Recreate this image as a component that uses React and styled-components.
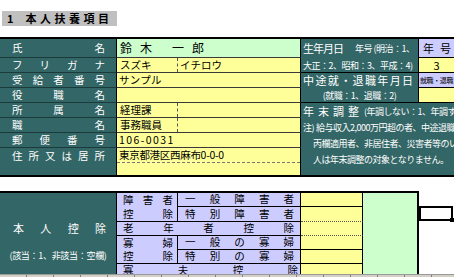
import React from 'react'
import styled, { createGlobalStyle } from 'styled-components'

const GlobalStyle = createGlobalStyle`
  html, body { margin: 0; padding: 0; background: #fff; }
  body { font-family: "Noto Sans CJK JP", "Noto Sans", sans-serif; }
  * { box-sizing: border-box; }
`

const teal = '#336666'
const lavender = '#ccccff'
const yellow = '#ffff99'
const green = '#ccffcc'

// each character as its own flex item, so a row can spread them edge to edge
const Spread = ({ text }) => [...text].map((c, i) => <span key={i}>{c}</span>)

const Sheet = styled.div`
  width: 454px;
  height: 277px;
  overflow: hidden;
  display: flex;
  flex-direction: column;
  padding-top: 11px;
`

const Title = styled.div`
  margin-left: 2px;
  width: 115px;
  height: 15px;
  background: #c0c0c0;
  display: flex;
  align-items: center;
  padding-left: 5px;
  font-size: 11px;
  font-weight: bold;
  line-height: 1;
  color: #000;
`
const TitleNum = styled.span`
  margin-right: 12px;
`
const TitleText = styled.span`
  letter-spacing: 3.5px;
`

const TopGrid = styled.div`
  margin-top: 11px;
  display: grid;
  grid-template-columns: 117px 184px 118px 1fr;
  grid-template-rows: 19px repeat(6, 15px) 27px;
  border-top: 2px solid #000;
  border-bottom: 2px solid #000;
  flex: none;
`

const Cell = styled.div`
  grid-column: ${p => p.$c};
  grid-row: ${p => p.$r};
  overflow: hidden;
  white-space: nowrap;
  line-height: 1;
`

const Label = styled(Cell)`
  background: ${teal};
  color: #fff;
  font-size: 10.5px;
  display: flex;
  justify-content: space-between;
  align-items: ${p => (p.$top ? 'flex-start' : 'center')};
  padding: ${p => (p.$top ? '3px' : '0')} 11px 0 12px;
  border-right: 1px solid #000;
  border-bottom: ${p => (p.$last ? 'none' : '1px solid #1c3a3a')};
`

const Data = styled(Cell)`
  background: ${p => (p.$green ? green : yellow)};
  color: #000;
  font-size: 10.5px;
  display: flex;
  align-items: stretch;
  border-right: 1px solid #000;
  border-bottom: ${p => (p.$last ? 'none' : '1px solid #3a3a3a')};
`

const Part = styled.div`
  display: flex;
  align-items: center;
  padding-left: ${p => (p.$split ? 3 : 2)}px;
  width: ${p => (p.$split ? '61px' : 'auto')};
  flex: ${p => (p.$split ? 'none' : 1)};
  border-right: ${p => (p.$split ? '1px dashed #555' : 'none')};
  letter-spacing: ${p => p.$ls || 'normal'};
`

const Address = styled.div`
  flex: 1;
  display: flex;
  flex-direction: column;
`
const AddressLine = styled.div`
  height: 15px;
  display: flex;
  align-items: center;
  padding-left: 2px;
  letter-spacing: -0.3px;
  border-bottom: 1px dashed #777;
`

const Name = styled.div`
  display: flex;
  align-items: center;
  padding-left: 3px;
  font-size: 12px;
`
const NameGroup = styled.span`
  letter-spacing: 8px;
  margin-left: ${p => p.$gap || 0}px;
`

const Info = styled(Cell)`
  background: ${teal};
  color: #fff;
  display: flex;
  flex-direction: column;
  border-right: ${p => (p.$wide ? 'none' : '1px solid #000')};
  border-bottom: ${p => (p.$wide ? 'none' : '1px solid #000')};
`
const InfoLine = styled.div`
  height: ${p => p.$h}px;
  flex: none;
  display: flex;
  align-items: center;
  justify-content: ${p => (p.$spread ? 'space-between' : p.$center ? 'center' : 'flex-start')};
  padding: 0 ${p => (p.$spread ? 5 : 0)}px 0 ${p => p.$indent ?? 2}px;
  font-size: ${p => (p.$spread ? '11px' : '9px')};
`
const Big = styled.span`
  font-size: 11px;
  letter-spacing: ${p => p.$ls || '-1px'};
  margin-right: ${p => p.$mr || 0}px;
`
const Small = styled.span`
  font-size: 9px;
  letter-spacing: -0.5px;
  margin-left: ${p => p.$ml || 0}px;
`

const Side = styled(Cell)`
  background: ${p => (p.$lav ? lavender : yellow)};
  color: #000;
  font-size: ${p => (p.$tiny ? '7px' : '11px')};
  letter-spacing: ${p => (p.$tiny ? '-0.4px' : 'normal')};
  display: flex;
  align-items: center;
  justify-content: ${p => (p.$spread ? 'space-between' : 'center')};
  padding: 0 ${p => (p.$spread ? '3px 0 4px' : '0')};
  border-bottom: 1px solid #000;
`

const Lower = styled.div`
  margin-top: 14px;
  flex: 1;
  min-height: 0;
  display: flex;
  align-items: flex-start;
`

const LowerGrid = styled.div`
  display: grid;
  grid-template-columns: 117px 61px 123px 62px 56px;
  grid-template-rows: 14px 15px 14px 14px 14px 10px;
  border-top: 2px solid #000;
`

const Deduct = styled(Cell)`
  background: ${teal};
  color: #fff;
  border-right: 1px solid #000;
  display: flex;
  flex-direction: column;
  padding-top: 28px;
`
const DeductTitle = styled.div`
  height: 14px;
  display: flex;
  align-items: center;
  justify-content: space-between;
  padding: 0 10px 0 13px;
  font-size: 11px;
`
const DeductNote = styled.div`
  margin-top: 13px;
  height: 14px;
  display: flex;
  align-items: center;
  justify-content: center;
  font-size: 9px;
  letter-spacing: -0.3px;
`

const Lav = styled(Cell)`
  background: ${lavender};
  color: #000;
  font-size: 10.5px;
  display: flex;
  flex-direction: column;
  border-right: 1px solid #000;
  border-bottom: ${p => (p.$last ? 'none' : '1px solid #000')};
`
const LavLine = styled.div`
  flex: 1;
  min-height: 0;
  display: flex;
  align-items: ${p => (p.$top ? 'flex-start' : 'center')};
  justify-content: space-between;
  padding: ${p => (p.$top ? 1 : 0)}px ${p => p.$pr}px 0 ${p => p.$pl}px;
`

const Entry = styled(Cell)`
  background: ${yellow};
  border-right: 1px solid #000;
  border-bottom: ${p =>
    p.$line === 'dot' ? '1px dotted #555' : p.$line === 'none' ? 'none' : '1px solid #000'};
`

const Memo = styled(Cell)`
  background: ${green};
  border-right: 2px solid #000;
`

const Margin = styled.div`
  flex: 1;
  padding-top: 15px;
`
const Picked = styled.div`
  position: relative;
  width: 34px;
  height: 15px;
  border: 2px solid #000;
  background: #fff;
`
const Handle = styled.span`
  position: absolute;
  right: -3px;
  bottom: -3px;
  width: 4px;
  height: 4px;
  background: #000;
`

const TabStrip = styled.div`
  height: 3px;
  flex: none;
  border-top: 1px solid #9a9a9a;
  background: repeating-linear-gradient(90deg, #d4d0c8 0 26px, #808080 26px 27px);
`

const labels = ['氏名', 'フリガナ', '受給者番号', '役職名', '所属名', '職名', '郵便番号', '住所又は居所']

export default function App() {
  return (
    <>
      <GlobalStyle />
      <Sheet>
        <Title>
          <TitleNum>1</TitleNum>
          <TitleText>本人扶養項目</TitleText>
        </Title>

        <TopGrid>
          {labels.map((t, i) => (
            <Label key={t} $c="1" $r={`${i + 1}`} $top={i === 7} $last={i === 7}>
              <Spread text={t} />
            </Label>
          ))}

          <Data $c="2" $r="1" $green>
            <Name>
              <NameGroup>鈴木</NameGroup>
              <NameGroup $gap={12}>一郎</NameGroup>
            </Name>
          </Data>
          <Data $c="2" $r="2">
            <Part $split>スズキ</Part>
            <Part>イチロウ</Part>
          </Data>
          <Data $c="2" $r="3">
            <Part $ls="0.3px">サンプル</Part>
          </Data>
          <Data $c="2" $r="4" />
          <Data $c="2" $r="5">
            <Part $split>経理課</Part>
            <Part />
          </Data>
          <Data $c="2" $r="6">
            <Part $split>事務職員</Part>
            <Part />
          </Data>
          <Data $c="2" $r="7">
            <Part $ls="1.4px">106-0031</Part>
          </Data>
          <Data $c="2" $r="8" $last>
            <Address>
              <AddressLine>東京都港区西麻布0-0-0</AddressLine>
            </Address>
          </Data>

          <Info $c="3" $r="1 / span 2">
            <InfoLine $h={19}>
              <Big $mr={12}>生年月日</Big>
              <Small>年号 (明治：1、</Small>
            </InfoLine>
            <InfoLine $h={14}>
              <Small>大正：2、昭和：3、平成：4)</Small>
            </InfoLine>
          </Info>
          <Info $c="3" $r="3 / span 2">
            <InfoLine $h={15} $spread>
              <Spread text="中途就・退職年月日" />
            </InfoLine>
            <InfoLine $h={14} $center $indent={0}>
              <Small>(就職：1、退職：2)</Small>
            </InfoLine>
          </Info>
          <Info $c="3 / span 2" $r="5 / span 4" $wide>
            <InfoLine $h={16}>
              <Big $ls="4px">年末調整</Big>
              <Small $ml={1}>(年調しない：1、年調する：2)</Small>
            </InfoLine>
            <InfoLine $h={16}>
              <Small>注)</Small>
              <Small $ml={2}>給与収入2,000万円超の者、中途退職者、</Small>
            </InfoLine>
            <InfoLine $h={16} $indent={12}>
              <Small>丙欄適用者、非居住者、災害者等のいずれかの</Small>
            </InfoLine>
            <InfoLine $h={16} $indent={12}>
              <Small>人は年末調整の対象となりません。</Small>
            </InfoLine>
          </Info>

          <Side $c="4" $r="1" $lav $spread>
            <Spread text="年号" />
          </Side>
          <Side $c="4" $r="2">3</Side>
          <Side $c="4" $r="3" $lav $tiny>就職・退職</Side>
          <Side $c="4" $r="4" />
        </TopGrid>

        <Lower>
          <LowerGrid>
            <Deduct $c="1" $r="1 / span 6">
              <DeductTitle>
                <Spread text="本人控除" />
              </DeductTitle>
              <DeductNote>(該当：1、非該当：空欄)</DeductNote>
            </Deduct>

            <Lav $c="2" $r="1 / span 2">
              <LavLine $pl={6} $pr={4}>
                <Spread text="障害者" />
              </LavLine>
              <LavLine $pl={6} $pr={4}>
                <Spread text="控除" />
              </LavLine>
            </Lav>
            <Lav $c="3" $r="1">
              <LavLine $pl={7} $pr={6}>
                <Spread text="一般障害者" />
              </LavLine>
            </Lav>
            <Lav $c="3" $r="2">
              <LavLine $pl={7} $pr={6}>
                <Spread text="特別障害者" />
              </LavLine>
            </Lav>
            <Lav $c="2 / span 2" $r="3">
              <LavLine $pl={6} $pr={6}>
                <Spread text="老年者控除" />
              </LavLine>
            </Lav>
            <Lav $c="2" $r="4 / span 2">
              <LavLine $pl={6} $pr={4}>
                <Spread text="寡婦" />
              </LavLine>
              <LavLine $pl={6} $pr={4}>
                <Spread text="控除" />
              </LavLine>
            </Lav>
            <Lav $c="3" $r="4">
              <LavLine $pl={7} $pr={6}>
                <Spread text="一般の寡婦" />
              </LavLine>
            </Lav>
            <Lav $c="3" $r="5">
              <LavLine $pl={7} $pr={6}>
                <Spread text="特別の寡婦" />
              </LavLine>
            </Lav>
            <Lav $c="2 / span 2" $r="6" $last>
              <LavLine $pl={6} $pr={2} $top>
                <Spread text="寡夫控除" />
              </LavLine>
            </Lav>

            <Entry $c="4" $r="1" />
            <Entry $c="4" $r="2" $line="dot" />
            <Entry $c="4" $r="3" $line="dot" />
            <Entry $c="4" $r="4" />
            <Entry $c="4" $r="5" />
            <Entry $c="4" $r="6" $line="none" />

            <Memo $c="5" $r="1 / span 6" />
          </LowerGrid>

          <Margin>
            <Picked>
              <Handle />
            </Picked>
          </Margin>
        </Lower>

        <TabStrip />
      </Sheet>
    </>
  )
}
